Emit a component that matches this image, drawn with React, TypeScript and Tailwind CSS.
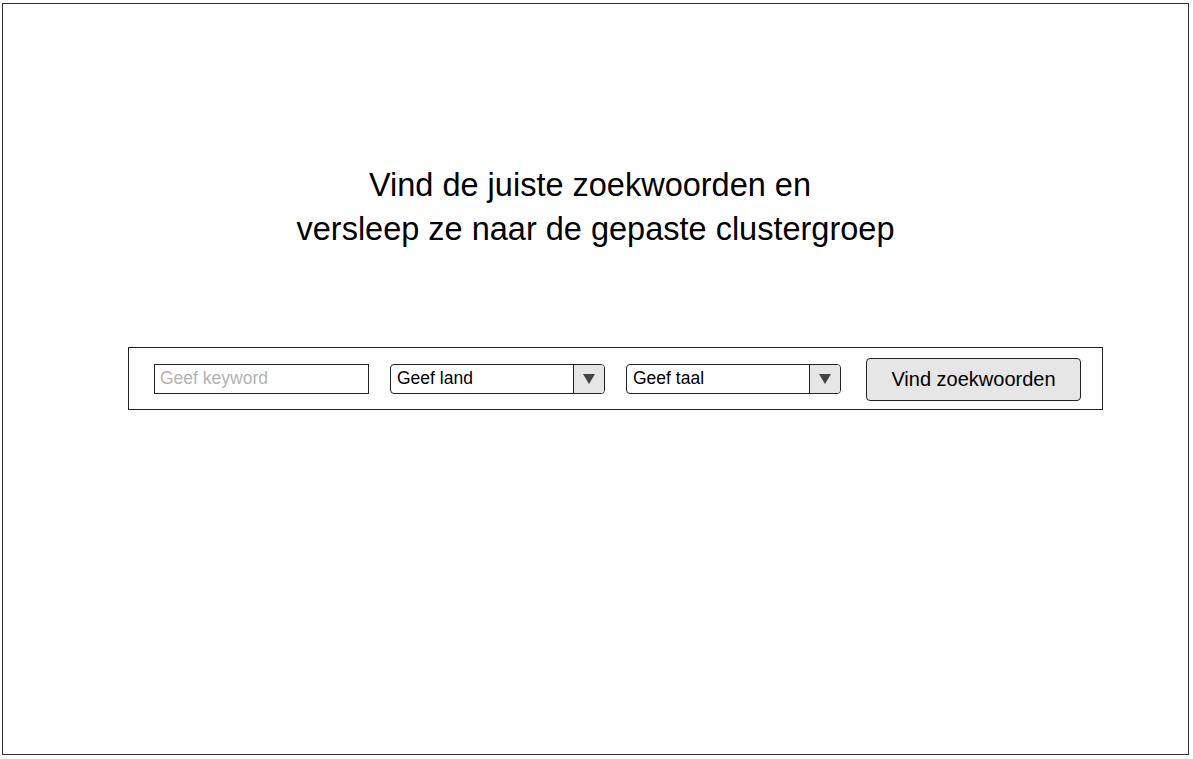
import React from "react";

function Select({ label }: { label: string }) {
  return (
    <div className="flex h-[30px] w-[215px] items-stretch rounded-[4px] border border-[#222] bg-white overflow-hidden">
      <div className="flex flex-1 items-center pl-[6px] text-[17.5px] text-black">{label}</div>
      <div className="flex w-[31px] items-center justify-center border-l border-[#222] bg-[#e6e6e6]">
        <svg width="12" height="10" viewBox="0 0 12 10">
          <path d="M0 0 L12 0 L6 10 Z" fill="#444" />
        </svg>
      </div>
    </div>
  );
}

export default function App() {
  return (
    <div className="h-[759px] w-[1193px] bg-white" style={{ fontFamily: '"Liberation Sans", Arial, sans-serif' }}>
      <div className="ml-[2px] mt-[3px] h-[752px] w-[1187px] border border-[#333] pt-[159px]">
        <div className="text-center text-[32.5px] leading-[44px] text-black">
          <div className="pr-[11px]">Vind de juiste zoekwoorden en</div>
          <div>versleep ze naar de gepaste clustergroep</div>
        </div>
        <div className="ml-[125px] mt-[96px] flex h-[63px] w-[975px] items-center border border-[#222] pl-[25px]">
          <div className="flex h-[30px] w-[215px] items-center border border-[#222] pl-[5px] text-[17.5px] text-[#b3b3b3]">
            Geef keyword
          </div>
          <div className="ml-[21px]">
            <Select label="Geef land" />
          </div>
          <div className="ml-[21px]">
            <Select label="Geef taal" />
          </div>
          <div className="ml-[25px] mt-[1px] flex h-[43px] w-[215px] items-center justify-center rounded-[4px] border border-[#222] bg-[#e6e6e6] text-[20px] text-black">
            Vind zoekwoorden
          </div>
        </div>
      </div>
    </div>
  );
}
